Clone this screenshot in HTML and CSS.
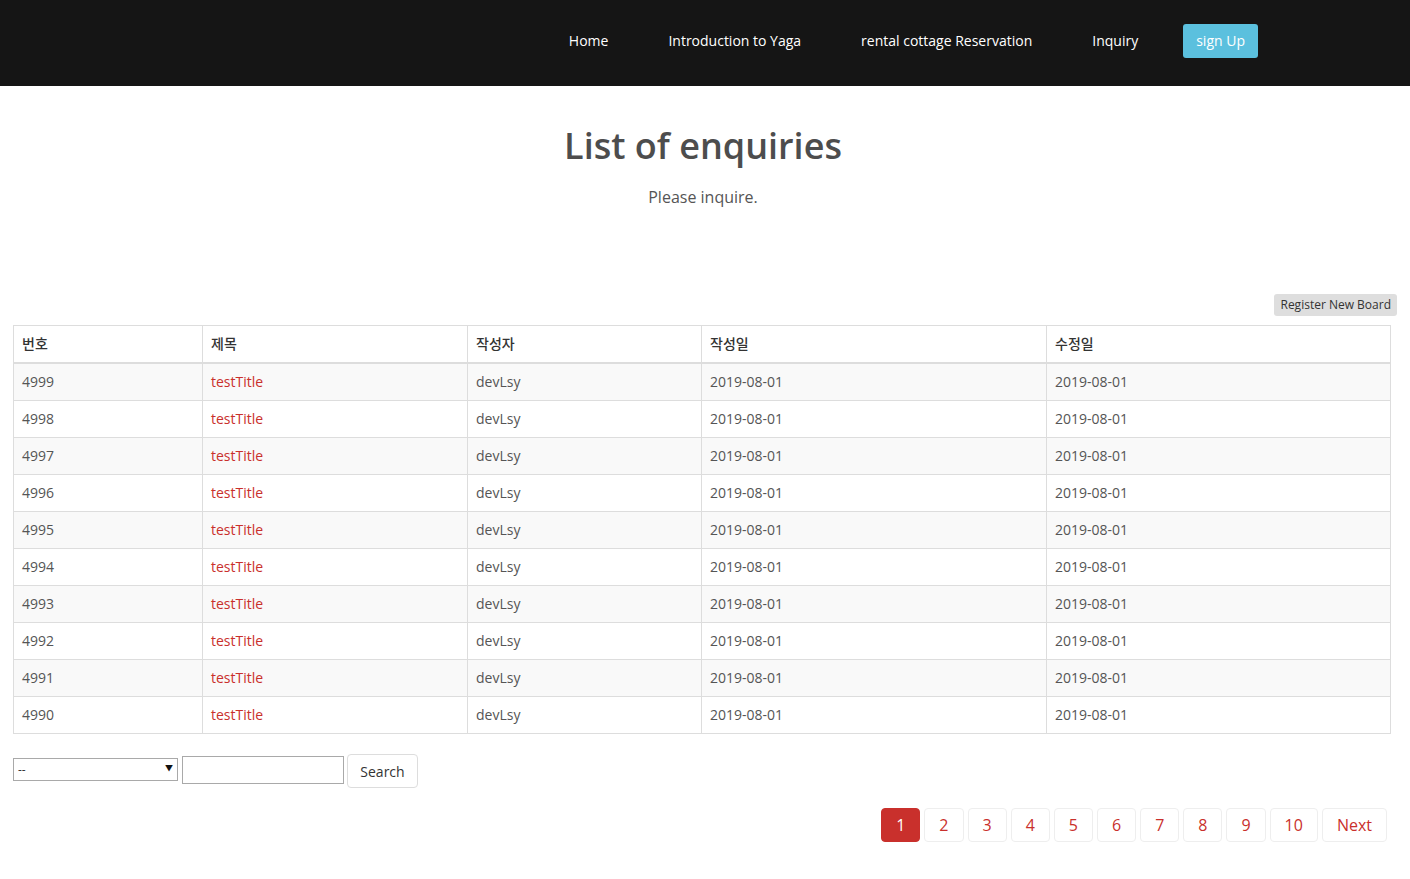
FILE: index.html
```html
<!DOCTYPE html>
<html lang="ko">
<head>
<meta charset="utf-8">
<title>List of enquiries</title>
<link rel="stylesheet" href="styles.css">
</head>
<body>
<header class="topbar">
  <nav class="menu">
    <a class="menu-link" href="#">Home</a>
    <a class="menu-link" href="#">Introduction to Yaga</a>
    <a class="menu-link" href="#">rental cottage Reservation</a>
    <a class="menu-link" href="#">Inquiry</a>
    <a class="signup" href="#">sign Up</a>
  </nav>
</header>

<section class="intro">
  <h1 class="title">List of enquiries</h1>
  <p class="subtitle">Please inquire.</p>
</section>

<main class="board">
  <div class="board-actions">
    <button class="register">Register New Board</button>
  </div>
  <table class="list">
    <colgroup>
      <col class="c1"><col class="c2"><col class="c3"><col class="c4"><col class="c5">
    </colgroup>
    <thead>
      <tr><th>번호</th><th>제목</th><th>작성자</th><th>작성일</th><th>수정일</th></tr>
    </thead>
    <tbody>
      <tr><td>4999</td><td><a href="#">testTitle</a></td><td>devLsy</td><td>2019-08-01</td><td>2019-08-01</td></tr>
      <tr><td>4998</td><td><a href="#">testTitle</a></td><td>devLsy</td><td>2019-08-01</td><td>2019-08-01</td></tr>
      <tr><td>4997</td><td><a href="#">testTitle</a></td><td>devLsy</td><td>2019-08-01</td><td>2019-08-01</td></tr>
      <tr><td>4996</td><td><a href="#">testTitle</a></td><td>devLsy</td><td>2019-08-01</td><td>2019-08-01</td></tr>
      <tr><td>4995</td><td><a href="#">testTitle</a></td><td>devLsy</td><td>2019-08-01</td><td>2019-08-01</td></tr>
      <tr><td>4994</td><td><a href="#">testTitle</a></td><td>devLsy</td><td>2019-08-01</td><td>2019-08-01</td></tr>
      <tr><td>4993</td><td><a href="#">testTitle</a></td><td>devLsy</td><td>2019-08-01</td><td>2019-08-01</td></tr>
      <tr><td>4992</td><td><a href="#">testTitle</a></td><td>devLsy</td><td>2019-08-01</td><td>2019-08-01</td></tr>
      <tr><td>4991</td><td><a href="#">testTitle</a></td><td>devLsy</td><td>2019-08-01</td><td>2019-08-01</td></tr>
      <tr><td>4990</td><td><a href="#">testTitle</a></td><td>devLsy</td><td>2019-08-01</td><td>2019-08-01</td></tr>
    </tbody>
  </table>

  <form class="search">
    <div class="select-wrap">
      <select class="search-type"><option>--</option></select>
      <span class="select-arrow">▼</span>
    </div>
    <input class="search-input" type="text">
    <button class="search-btn" type="button">Search</button>
  </form>

  <ul class="pager">
    <li><a class="page active" href="#">1</a></li>
    <li><a class="page" href="#">2</a></li>
    <li><a class="page" href="#">3</a></li>
    <li><a class="page" href="#">4</a></li>
    <li><a class="page" href="#">5</a></li>
    <li><a class="page" href="#">6</a></li>
    <li><a class="page" href="#">7</a></li>
    <li><a class="page" href="#">8</a></li>
    <li><a class="page" href="#">9</a></li>
    <li><a class="page" href="#">10</a></li>
    <li><a class="page" href="#">Next</a></li>
  </ul>
</main>
</body>
</html>
```

FILE: styles.css
```css
* { box-sizing: border-box; }

body {
  margin: 0;
  font-family: "Open Sans", "Noto Sans CJK KR", sans-serif;
  font-size: 14px;
  line-height: 20px;
  color: #555;
  background: #fff;
}

a { text-decoration: none; }

.topbar {
  background: #151515;
  height: 86px;
  display: flex;
  align-items: center;
  justify-content: flex-end;
  padding-right: 152px;
  padding-bottom: 4px;
}

.menu {
  display: flex;
  align-items: center;
}

.menu-link {
  color: #fff;
  font-size: 14px;
  padding: 0 30px;
  line-height: 20px;
}

.menu-link:first-child { padding-left: 0; }

.signup {
  margin-left: 15px;
  background: #5bc0de;
  color: #fff;
  font-size: 14px;
  line-height: 20px;
  padding: 7px 13px;
  border-radius: 3px;
}

.intro {
  text-align: center;
  padding-top: 38px;
}

.title {
  margin: 0;
  font-size: 36px;
  font-weight: 600;
  line-height: 44px;
  color: #4d4d4d;
  padding-right: 4px;
}

.subtitle {
  margin: 18px 0 0;
  font-size: 16px;
  line-height: 22px;
  color: #555;
  padding-right: 4px;
}

.board {
  padding: 86px 19px 0 13px;
}

.board-actions {
  display: flex;
  justify-content: flex-end;
  margin-right: -6px;
  margin-bottom: 9px;
}

.register {
  font-family: "Open Sans", sans-serif;
  font-size: 12px;
  line-height: 16px;
  padding: 3px 6px;
  border: 0;
  border-radius: 3px;
  background: #dedede;
  color: #333;
}

.list {
  width: 100%;
  border-collapse: collapse;
  border: 1px solid #ddd;
}

.c1 { width: 189px; }
.c2 { width: 265px; }
.c3 { width: 234px; }
.c4 { width: 345px; }

.list th,
.list td {
  text-align: left;
  padding: 8px;
  border: 1px solid #ddd;
  line-height: 20px;
  font-size: 14px;
}

.list th {
  font-weight: 500;
  color: #333;
  border-bottom: 2px solid #ddd;
  padding: 8px;
}

.list td { color: #555; }

.list tbody tr:nth-child(odd) { background: #f9f9f9; }

.list a { color: #c9302c; }

.search {
  display: flex;
  align-items: center;
  margin-top: 20px;
  height: 34px;
}

.select-wrap {
  position: relative;
  width: 165px;
  height: 23px;
  margin-bottom: 3px;
}

.search-type {
  width: 165px;
  height: 23px;
  font-family: "Open Sans", sans-serif;
  font-size: 12px;
  border: 1px solid #a9a9a9;
  background: #fff;
  border-radius: 0;
  color: #333;
  appearance: none;
  -webkit-appearance: none;
  padding: 0 4px;
}

.select-arrow {
  position: absolute;
  right: 5px;
  top: 4px;
  font-size: 8px;
  line-height: 12px;
  color: #111;
  pointer-events: none;
}

.search-input {
  width: 162px;
  height: 28px;
  margin-left: 4px;
  margin-bottom: 2px;
  border: 1px solid #a9a9a9;
  border-radius: 0;
}

.search-btn {
  margin-left: 3px;
  width: 71px;
  height: 34px;
  font-family: "Open Sans", sans-serif;
  font-size: 14px;
  color: #333;
  background: #fff;
  border: 1px solid #ddd;
  border-radius: 4px;
}

.pager {
  list-style: none;
  margin: 20px 4px 0 0;
  padding: 0;
  display: flex;
  justify-content: flex-end;
}

.pager li { margin-left: 4px; }

.page {
  display: block;
  font-size: 16px;
  line-height: 20px;
  padding: 6px 14px;
  border: 1px solid #eee;
  border-radius: 4px;
  color: #c9302c;
  background: #fff;
}

.page.active {
  background: #c9302c;
  border-color: #c9302c;
  color: #fff;
}
```
